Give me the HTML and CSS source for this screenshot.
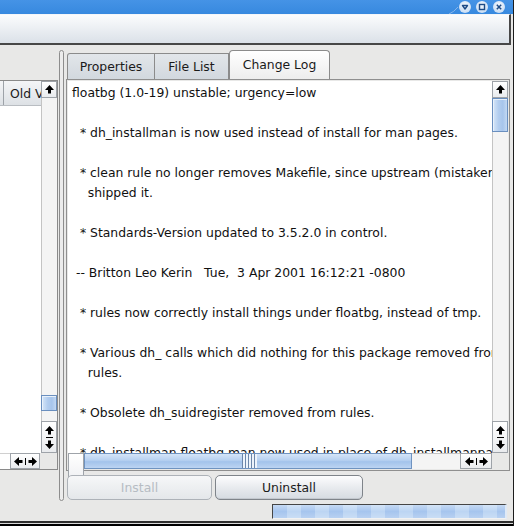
FILE: index.html
```html
<!DOCTYPE html>
<html>
<head>
<meta charset="utf-8">
<title>Package Manager</title>
<link rel="stylesheet" href="styles.css">
</head>
<body>
<div class="window">
  <div class="titlebar">
    <svg class="title-curve" width="10" height="14" viewBox="0 0 10 14"><path d="M0 14 Q5 12 9 7" fill="none" stroke="#86b6ec" stroke-width="1"/></svg>
    <div class="tbtns">
      <span class="tbtn"><svg width="12" height="12" viewBox="0 0 12 12"><path d="M3.5 4.5 L6 8 L8.5 4.5 Z" fill="none" stroke="#1d4b86" stroke-width="1.4" stroke-linejoin="round"/></svg></span>
      <span class="tbtn"><svg width="12" height="12" viewBox="0 0 12 12"><rect x="3.5" y="3.5" width="5" height="5" fill="none" stroke="#1d4b86" stroke-width="1.4"/></svg></span>
      <span class="tbtn"><svg width="12" height="12" viewBox="0 0 12 12"><path d="M3.8 3.8 L8.2 8.2 M8.2 3.8 L3.8 8.2" stroke="#1d4b86" stroke-width="1.5"/></svg></span>
    </div>
  </div>
  <div class="topbox"></div>
  <div class="main">
    <div class="left">
      <div class="list">
        <div class="list-top">
          <div class="list-cols">
            <div class="list-head"><span class="hsep"></span><span class="htext">Old Version</span></div>
            <div class="list-body"></div>
          </div>
          <div class="vscroll">
            <div class="sbtn up"><svg width="9" height="9" viewBox="0 0 9 9"><path d="M4.5 0 L9 5 H6 V8.5 H3 V5 H0 Z"/></svg></div>
            <div class="track">
              <div class="vthumb low"></div>
            </div>
            <div class="sbtn pair">
              <svg width="9" height="9" viewBox="0 0 9 9"><path d="M4.5 0 L9 5 H6 V8.5 H3 V5 H0 Z"/></svg>
              <span class="hline"></span>
              <svg width="9" height="9" viewBox="0 0 9 9"><path d="M4.5 9 L9 4 H6 V0.5 H3 V4 H0 Z"/></svg>
            </div>
          </div>
        </div>
        <div class="list-bottom">
          <div class="hs-white"></div>
          <div class="sbtn lr small">
            <svg width="9" height="9" viewBox="0 0 9 9"><path d="M0 4.5 L5 0 V3 H8.5 V6 H5 V9 Z"/></svg>
            <span class="vline"></span>
            <svg width="9" height="9" viewBox="0 0 9 9"><path d="M9 4.5 L4 0 V3 H0.5 V6 H4 V9 Z"/></svg>
          </div>
        </div>
      </div>
    </div>
    <div class="splitter"></div>
    <div class="right">
      <div class="tabs">
        <div class="tab tab-props">Properties</div>
        <div class="tab tab-files">File List</div>
        <div class="tab tab-active">Change Log</div>
      </div>
      <div class="frame">
        <div class="sw">
          <div class="text">floatbg (1.0-19) unstable; urgency=low

  * dh_installman is now used instead of install for man pages.

  * clean rule no longer removes Makefile, since upstream (mistakenly)
    shipped it.

  * Standards-Version updated to 3.5.2.0 in control.

 -- Britton Leo Kerin   Tue,  3 Apr 2001 16:12:21 -0800

  * rules now correctly install things under floatbg, instead of tmp.

  * Various dh_ calls which did nothing for this package removed from
    rules.

  * Obsolete dh_suidregister removed from rules.

  * dh_installman floatbg.man now used in place of dh_installmanpages.</div>
          <div class="vscroll">
            <div class="sbtn up"><svg width="9" height="9" viewBox="0 0 9 9"><path d="M4.5 0 L9 5 H6 V8.5 H3 V5 H0 Z"/></svg></div>
            <div class="track">
              <div class="vthumb top"></div>
            </div>
            <div class="sbtn pair">
              <svg width="9" height="9" viewBox="0 0 9 9"><path d="M4.5 0 L9 5 H6 V8.5 H3 V5 H0 Z"/></svg>
              <span class="hline"></span>
              <svg width="9" height="9" viewBox="0 0 9 9"><path d="M4.5 9 L9 4 H6 V0.5 H3 V4 H0 Z"/></svg>
            </div>
          </div>
          <div class="hscroll">
            <div class="sbtn left"><svg width="9" height="9" viewBox="0 0 9 9"><path d="M0 4.5 L5 0 V3 H8.5 V6 H5 V9 Z"/></svg></div>
            <div class="hthumb"><span class="grip"></span></div>
            <div class="htrack"></div>
            <div class="sbtn lr">
              <svg width="9" height="9" viewBox="0 0 9 9"><path d="M0 4.5 L5 0 V3 H8.5 V6 H5 V9 Z"/></svg>
              <span class="vline"></span>
              <svg width="9" height="9" viewBox="0 0 9 9"><path d="M9 4.5 L4 0 V3 H0.5 V6 H4 V9 Z"/></svg>
            </div>
          </div>
          <div class="corner"></div>
        </div>
      </div>
      <div class="buttons">
        <button class="btn btn-install" disabled>Install</button>
        <button class="btn btn-uninstall">Uninstall</button>
      </div>
    </div>
  </div>
  <div class="statusbar"><div class="progress"></div></div>
  <div class="bottomedge"></div>
</div>
</body>
</html>
```
FILE: styles.css
```css
* { box-sizing: border-box; }
html, body { margin: 0; padding: 0; }
body {
  width: 514px; height: 526px; overflow: hidden;
  font-family: "DejaVu Sans", "Bitstream Vera Sans", sans-serif;
  font-size: 12.4px; color: #1a1a1a;
  background: #e8e8e7;
}
.window {
  width: 514px; height: 526px;
  display: flex; flex-direction: column;
  background: #e8e8e7;
  border-right: 1px solid #1c1c1c;
}
.titlebar {
  height: 14px; flex: none;
  background: linear-gradient(#4593e6, #3789df);
  display: flex; justify-content: flex-end; align-items: flex-start;
  padding-right: 8px;
}
.tbtns { display: flex; gap: 5px; padding-top: 1px; }
.tbtn {
  width: 12px; height: 12px; border-radius: 50%;
  background: radial-gradient(circle at 50% 35%, #f4f8fd, #bcd5f1);
  display: block;
}
.tbtn svg { display: block; }
.topbox {
  height: 31px; flex: none;
  margin-right: 2px;
  border-right: 2px solid #474747;
  border-bottom: 2px solid #474747;
  border-top: 1px solid #f4f6f9;
  background: linear-gradient(#fbfcfd, #dbe1e8);
}
.main { height: 456px; flex: none; display: flex; }
.left { width: 58px; flex: none; padding-top: 35px; }
.list {
  height: 390px;
  border-top: 1px solid #8a8a8a;
  border-right: 1px solid #8a8a8a;
  border-bottom: 1px solid #8a8a8a;
  display: flex; flex-direction: column;
}
.list-top { height: 372px; display: flex; }
.list-cols { width: 41px; display: flex; flex-direction: column; overflow: hidden; }
.list-head {
  height: 25px; flex: none; display: flex; align-items: center;
  background: linear-gradient(#f4f5f7, #dde1e5);
  border-bottom: 1px solid #b9bdc2;
  white-space: nowrap; overflow: hidden;
}
.hsep { width: 1px; height: 25px; background: #9da2a8; margin-left: 3px; flex: none; }
.htext { margin-left: 6px; padding-top: 1px; }
.list-body { flex: 1; background: #fff; }
.list-bottom { height: 16px; display: flex; }
.hs-white { width: 10px; background: #fff; border-top: 1px solid #d0d0d0; }

.vscroll {
  width: 16px; flex: none;
  display: flex; flex-direction: column;
  background: #f4f4f4;
  border-left: 1px solid #c4c4c4;
}
.sbtn {
  background: linear-gradient(#ffffff, #e9ebee);
  border: 1px solid #9ea3a9;
  display: flex; align-items: center; justify-content: center;
  flex: none;
}
.sbtn svg { display: block; fill: #000; }
.vscroll .sbtn { margin-left: -1px; width: 16px; }
.sbtn.up { height: 17px; }
.sbtn.pair { height: 32px; flex-direction: column; gap: 1px; }
.hline { width: 7px; height: 1px; background: #000; margin: 1px 0; }
.vline { width: 1px; height: 7px; background: #000; margin: 0 2px; }
.track { flex: 1; display: flex; flex-direction: column; }
.vthumb {
  width: 16px; margin-left: -1px;
  border: 1px solid #6a8fbf;
  background: linear-gradient(90deg, #d6e6f8, #b2cdef 40%, #a7c5ec 70%, #c2d8f3);
  box-shadow: inset 1px 1px 0 #e8f1fb;
}
.vthumb.top { height: 34px; }
.vthumb.low { height: 16px; margin-top: auto; margin-bottom: 10px; }

.splitter {
  width: 5px; height: 451px; margin-left: 1px; margin-top: 5px;
  border: 1px solid #8d8d8d; border-radius: 3px;
  background: #ececec; flex: none;
}
.right { width: 444px; margin-left: 2px; flex: none; display: flex; flex-direction: column; }
.tabs { height: 29px; margin-top: 5px; display: flex; align-items: flex-end; padding-left: 1px; }
.tab {
  height: 26px; display: flex; align-items: center; justify-content: center;
  border: 1px solid #8b8b8b; border-bottom: none;
  background: linear-gradient(#e2e6ea, #d2d8de);
  padding-bottom: 1px;
}
.tab-props { width: 88px; border-radius: 3px 0 0 0; }
.tab-files { width: 74px; border-left: none; }
.tab-active {
  width: 101px; height: 29px;
  background: linear-gradient(#ffffff, #ededed);
  border-radius: 4px 4px 0 0;
  padding-bottom: 2px;
}
.frame {
  height: 392px; border: 1px solid #8f8f8f; padding: 1px;
  background: #e8e8e7;
}
.sw {
  display: grid;
  grid-template-columns: 424px 16px;
  grid-template-rows: 372px 16px;
}
.text {
  background: #fff; overflow: hidden; white-space: pre;
  line-height: 20px; padding: 2px 0 0 4px; color: #111;
}
.hscroll { display: flex; background: #f4f4f4; border-top: 1px solid #c4c4c4; }
.hscroll .sbtn { height: 16px; margin-top: -1px; }
.sbtn.left { width: 16px; }
.sbtn.lr { width: 32px; }
.sbtn.small { width: 30px; height: 16px; }
.hthumb {
  width: 328px; height: 16px; margin-top: -1px;
  border: 1px solid #6f93c0;
  background: linear-gradient(#d5e5f8, #b6d0f0 45%, #a3c3eb 55%, #bcd4f2);
  display: flex; align-items: center; justify-content: center;
}
.grip {
  width: 15px; height: 14px; margin-left: 2px;
  background: repeating-linear-gradient(90deg, #6d87aa 0 1px, #eef4fb 1px 3px);
}
.htrack { flex: 1; }
.corner { background: #e8e8e7; }

.buttons { display: flex; gap: 3px; margin-top: 4px; padding-left: 1px; }
.btn {
  height: 25px; font: inherit; border-radius: 5px;
  border: 1px solid #7f848a;
  background: linear-gradient(#fdfdfe, #e6e9ed 55%, #d6dbe1);
  color: #1a1a1a; padding: 0;
  box-shadow: inset 0 -1px 0 #c3c8ce;
}
.btn-install { width: 145px; border-color: #adb2b8; color: #b6bcc3; background: linear-gradient(#f6f7f8, #e4e7ea); box-shadow: none; }
.btn-uninstall { width: 148px; }

.statusbar { height: 20px; flex: none; display: flex; justify-content: flex-end; padding-right: 6px; padding-top: 3px; }
.progress {
  width: 235px; height: 15px;
  border-top: 1px solid #454545; border-left: 1px solid #454545;
  border-right: 2px solid #dfe9f6; border-bottom: 1px solid #f2f2f2;
  background:
    linear-gradient(rgba(255,255,255,0.35), rgba(255,255,255,0) 50%, rgba(255,255,255,0.2)),
    repeating-linear-gradient(90deg, #a6c5ee 0 14px, #bcd5f3 14px 28px);
}
.bottomedge {
  height: 5px; flex: none;
  border-top: 2px solid #2e2e2e; border-bottom: 2px solid #000;
  background: #d8d8d8;
}
```
